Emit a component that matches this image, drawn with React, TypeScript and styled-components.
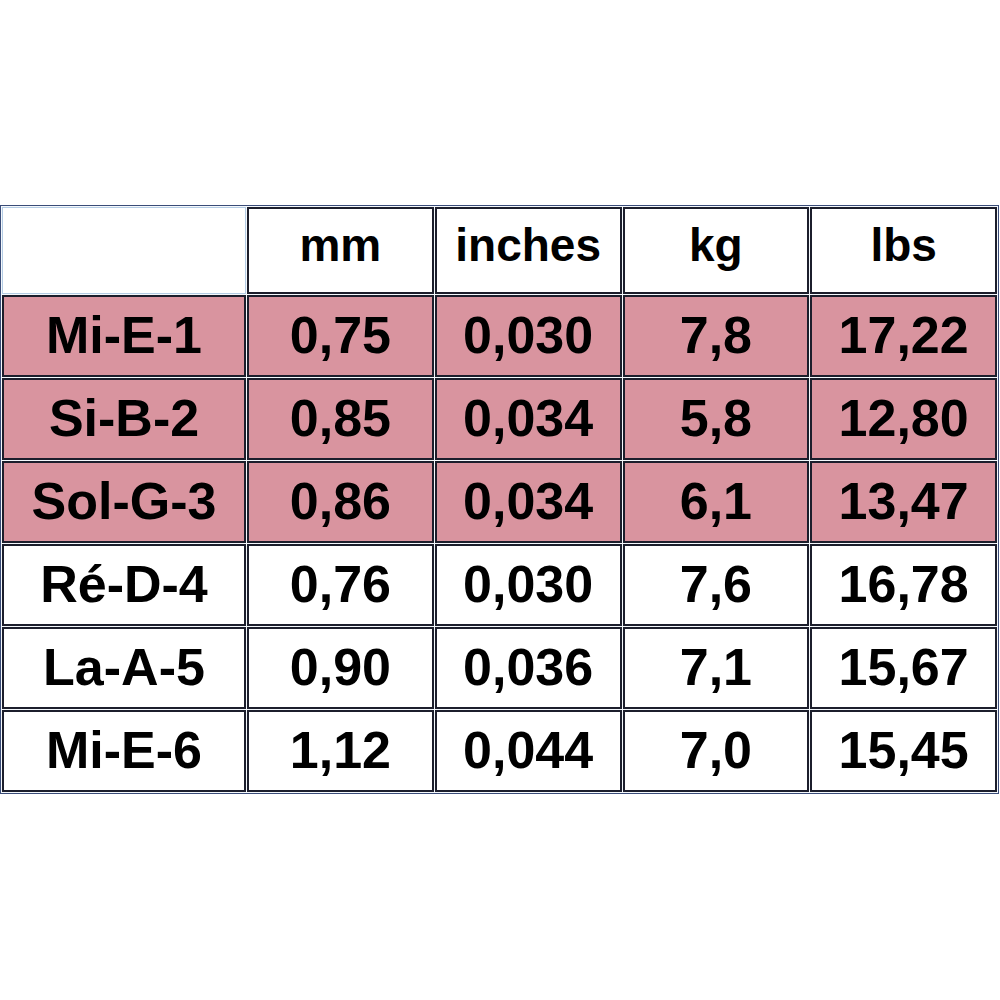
import React from 'react'
import styled, { createGlobalStyle } from 'styled-components'

const GlobalStyle = createGlobalStyle`
  body {
    margin: 0;
    background: #ffffff;
    font-family: "Liberation Sans", Arial, sans-serif;
  }
`
const Page = styled.div`
  width: 1000px;
  height: 1000px;
  padding: 205px 0 0 0;
  box-sizing: border-box;
`
const Table = styled.table`
  width: 999px;
  border-collapse: separate;
  border-spacing: 1px;
  border: 1px solid #3a4c78;
  background: #f4f8fc;
  table-layout: fixed;
`
const HeadCell = styled.th<{ $blank?: boolean }>`
  box-sizing: border-box;
  height: 87px;
  padding: 0 0 12px;
  border: ${p => (p.$blank ? '1px solid #b4cce4' : '2px solid #1c1e2c')};
  background: #ffffff;
  font-size: 46px;
  font-weight: bold;
  text-align: center;
  color: #000;
  &:first-child {
    width: 244px;
  }
`
const Cell = styled.td<{ $pink?: boolean }>`
  box-sizing: border-box;
  height: 82px;
  padding: 0 0 2px;
  border: 2px solid #1c1e2c;
  background: ${p => (p.$pink ? '#d9949f' : '#ffffff')};
  font-size: 52px;
  font-weight: bold;
  text-align: center;
  color: #000;
`

const headers = ['mm', 'inches', 'kg', 'lbs']
const rows = [
  ['Mi-E-1', '0,75', '0,030', '7,8', '17,22'],
  ['Si-B-2', '0,85', '0,034', '5,8', '12,80'],
  ['Sol-G-3', '0,86', '0,034', '6,1', '13,47'],
  ['Ré-D-4', '0,76', '0,030', '7,6', '16,78'],
  ['La-A-5', '0,90', '0,036', '7,1', '15,67'],
  ['Mi-E-6', '1,12', '0,044', '7,0', '15,45'],
]

const App = () => (
  <Page>
    <GlobalStyle />
    <Table>
      <thead>
        <tr>
          <HeadCell $blank></HeadCell>
          {headers.map(h => (
            <HeadCell key={h}>{h}</HeadCell>
          ))}
        </tr>
      </thead>
      <tbody>
        {rows.map((row, index) => (
          <tr key={`row_${index}`}>
            {row.map((value, i) => (
              <Cell key={`cell_${i}`} $pink={index < 3}>
                {value}
              </Cell>
            ))}
          </tr>
        ))}
      </tbody>
    </Table>
  </Page>
)

export default App
